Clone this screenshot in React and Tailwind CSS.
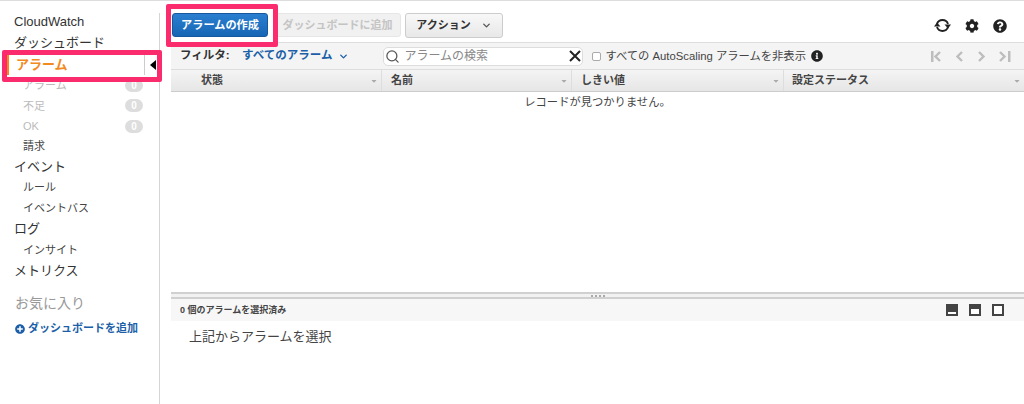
import React from 'react';
import { FaCog, FaQuestionCircle, FaInfoCircle, FaPlusCircle, FaCaretDown } from 'react-icons/fa';
import { FiChevronDown } from 'react-icons/fi';
import { Search } from 'lucide-react';

const font = 'font-["Liberation_Sans","Noto_Sans_CJK_JP",sans-serif]';

function NavTop({ children, className = '' }) {
  return <div className={`h-[20.6px] leading-[20.6px] pl-[14px] text-[13px] text-[#333] ${className}`}>{children}</div>;
}

function NavSub({ children, muted, badge, className = '' }) {
  return (
    <div className={`h-[20.4px] leading-[20.4px] pl-[23px] pr-[16px] flex items-center justify-between text-[11px] ${muted ? 'text-[#bbb]' : 'text-[#444]'} ${className}`}>
      <span>{children}</span>
      {badge && <span className="w-[18px] h-[13px] rounded-full bg-[#ddd] text-white text-[10px] font-bold leading-[13px] text-center">0</span>}
    </div>
  );
}

function Col({ label, className }) {
  return (
    <div className={`flex items-center justify-between border-r border-[#ddd] h-full pr-[3px] ${className}`}>
      <span className="font-bold text-[11px] text-[#444]">{label}</span>
      <FaCaretDown size={8} className="text-[#aaa]" />
    </div>
  );
}

function PageIcon({ d, bar }) {
  return (
    <svg width="15" height="13" viewBox="0 0 15 13" className="text-[#bdbdbd]">
      {bar && <rect x={bar} y="1" width="2.5" height="11" fill="currentColor" />}
      <path d={d} fill="none" stroke="currentColor" strokeWidth="2.4" />
    </svg>
  );
}

function PaneIcon({ fill }) {
  return (
    <div className="w-[12px] h-[12px] border-2 border-[#444] bg-white flex flex-col justify-start">
      <div className="bg-[#444] w-full" style={{ height: fill }} />
    </div>
  );
}

export default function App() {
  return (
    <div className={`relative w-[1024px] h-[404px] overflow-hidden bg-white border-t border-[#ddd] ${font}`}>
      <div className="flex h-full">
        {/* Sidebar */}
        <div className="w-[160px] shrink-0 mt-[12px] border-r border-[#d5d5d5] h-[391px]">
          <div className="-mt-[1px]">
            <NavTop>CloudWatch</NavTop>
            <NavTop>ダッシュボード</NavTop>
            <div className="mt-[1px] h-[21px] flex items-center justify-between pr-[3px] border-l-2 border-[#f08a1d] ml-[7px]">
              <span className="pl-[7px] text-[13px] font-bold text-[#f28a1e]">アラーム</span>
              <span className="h-full border-l border-[#ccc] flex items-center pl-[5px]">
                <span className="w-0 h-0 border-y-[5px] border-y-transparent border-r-[6px] border-r-black" />
              </span>
            </div>
            <NavSub muted badge>アラーム</NavSub>
            <NavSub muted badge>不足</NavSub>
            <NavSub muted badge>OK</NavSub>
            <NavSub>請求</NavSub>
            <NavTop>イベント</NavTop>
            <NavSub>ルール</NavSub>
            <NavSub>イベントバス</NavSub>
            <NavTop className="mt-[1px]">ログ</NavTop>
            <NavSub>インサイト</NavSub>
            <NavTop className="mt-[1px]">メトリクス</NavTop>
            <div className="mt-[11px] pl-[15px] text-[14px] text-[#999] h-[20px] leading-[20px]">お気に入り</div>
            <div className="mt-[6px] pl-[15px] flex items-center gap-[3px] text-[11px] font-bold text-[#1c5fa8] h-[20px]">
              <FaPlusCircle size={10} />
              <span>ダッシュボードを追加</span>
            </div>
          </div>
        </div>

        {/* Main */}
        <div className="flex-1 flex flex-col ml-[11px] min-w-0">
          {/* Toolbar */}
          <div className="h-[41px] flex items-start pt-[12px] pl-[1px]">
            <button className="w-[96px] h-[24px] rounded-[3px] bg-linear-to-b from-[#2a7fd0] to-[#1766b5] border border-[#16589c] text-white text-[11.2px] font-bold">アラームの作成</button>
            <button className="ml-[6px] w-[127px] h-[24px] rounded-[3px] bg-[#f1f1f1] border border-[#e6e6e6] text-[#c4c4c4] text-[11px] font-bold">ダッシュボードに追加</button>
            <button className="ml-[4px] w-[98px] h-[25px] rounded-[3px] bg-linear-to-b from-[#f8f8f8] to-[#e8e8e8] border border-[#ccc] text-[#333] text-[11px] font-bold flex items-center justify-center gap-[10px]">
              アクション
              <FiChevronDown size={11} strokeWidth={3} className="text-[#555]" />
            </button>
            <div className="ml-auto flex items-center gap-[14px] pr-[17px] pt-[5px] text-[#222]">
              <svg width="17" height="15" viewBox="0 0 17 15">
                <path d="M3 6A5.8 5.8 0 0 1 14 6M14 9A5.8 5.8 0 0 1 3 9" fill="none" stroke="currentColor" strokeWidth="1.9" />
                <path d="M10.5 6.5H17L14 10.5ZM0 8.5H6.5L3 4.5Z" fill="currentColor" />
              </svg>
              <FaCog size={14} />
              <FaQuestionCircle size={14} />
            </div>
          </div>

          {/* Filter bar */}
          <div className="h-[28px] bg-[#f4f4f4] border-y border-[#ddd] flex items-center text-[11.5px]">
            <span className="ml-[9px] w-[62px] font-bold text-[#333]">フィルタ:</span>
            <span className="font-bold text-[#1c5fa8]">すべてのアラーム</span>
            <FiChevronDown size={11} strokeWidth={3} className="ml-[6px] text-[#1c5fa8]" />
            <div className="ml-[34px] w-[200px] h-[19px] bg-white border border-[#ddd] rounded-[5px] flex items-center pl-[1px] pr-[1px]">
              <Search size={15} strokeWidth={2} className="text-[#555] shrink-0" />
              <span className="ml-[4px] text-[12px] text-[#888] flex-1">アラームの検索</span>
              <svg width="12" height="12" viewBox="0 0 12 12" className="shrink-0">
                <path d="M1 1L11 11M11 1L1 11" stroke="#222" strokeWidth="2" />
              </svg>
            </div>
            <span className="ml-[9px] w-[9px] h-[9px] bg-white border border-[#aaa] rounded-[2px]" />
            <span className="ml-[4px] text-[11.3px] text-[#444]">すべての AutoScaling アラームを非表示</span>
            <FaInfoCircle size={12} className="ml-[5px] text-[#222]" />
            <div className="ml-auto flex items-center gap-[7px] pr-[13px]">
              <PageIcon bar={1} d="M10 2L5.5 6.5L10 11" />
              <PageIcon d="M10 2L5.5 6.5L10 11" />
              <PageIcon d="M5 2L9.5 6.5L5 11" />
              <PageIcon bar={12} d="M4 2L8.5 6.5L4 11" />
            </div>
          </div>

          {/* Table header */}
          <div className="h-[22px] bg-linear-to-b from-[#f4f4f4] to-[#e6e6e6] border-b border-[#ccc] flex items-center">
            <Col label="状態" className="w-[211px] pl-[30px]" />
            <Col label="名前" className="w-[190px] pl-[9px]" />
            <Col label="しきい値" className="w-[212px] pl-[9px]" />
            <div className="flex-1 flex items-center justify-between pl-[8px] pr-[3px]">
              <span className="font-bold text-[11px] text-[#444]">設定ステータス</span>
              <FaCaretDown size={8} className="text-[#aaa]" />
            </div>
          </div>

          <div className="h-[200px] text-center text-[11.3px] text-[#444] leading-[20px]">レコードが見つかりません。</div>

          {/* Split pane */}
          <div className="h-[7px] border-y-2 border-y-[#d0d0d0] bg-[#f2f2f2] flex items-center justify-center gap-[2px]">
            <span className="w-[2px] h-[2px] bg-[#aaa]" />
            <span className="w-[2px] h-[2px] bg-[#aaa]" />
            <span className="w-[2px] h-[2px] bg-[#aaa]" />
            <span className="w-[2px] h-[2px] bg-[#aaa]" />
          </div>
          <div className="h-[22px] bg-[#f7f7f7] flex items-center justify-between pl-[9px] pr-[20px] text-[9px] font-bold text-[#444]">
            <span className="pt-[1px]">0 個のアラームを選択済み</span>
            <div className="flex items-center gap-[11px]">
              <PaneIcon fill="6px" />
              <PaneIcon fill="3px" />
              <PaneIcon fill="0px" />
            </div>
          </div>
          <div className="pl-[18px] pt-[6px] text-[13px] text-[#444]">上記からアラームを選択</div>
        </div>
      </div>

      {/* Highlight boxes over the console */}
      <div className="absolute left-[166px] top-[3px] w-[112px] h-[43px] border-[5px] border-[#fb2c6e] rounded-[2px]" />
      <div className="absolute left-[2px] top-[49px] w-[160px] h-[32px] border-[5px] border-[#fb2c6e] rounded-[2px]" />
    </div>
  );
}
